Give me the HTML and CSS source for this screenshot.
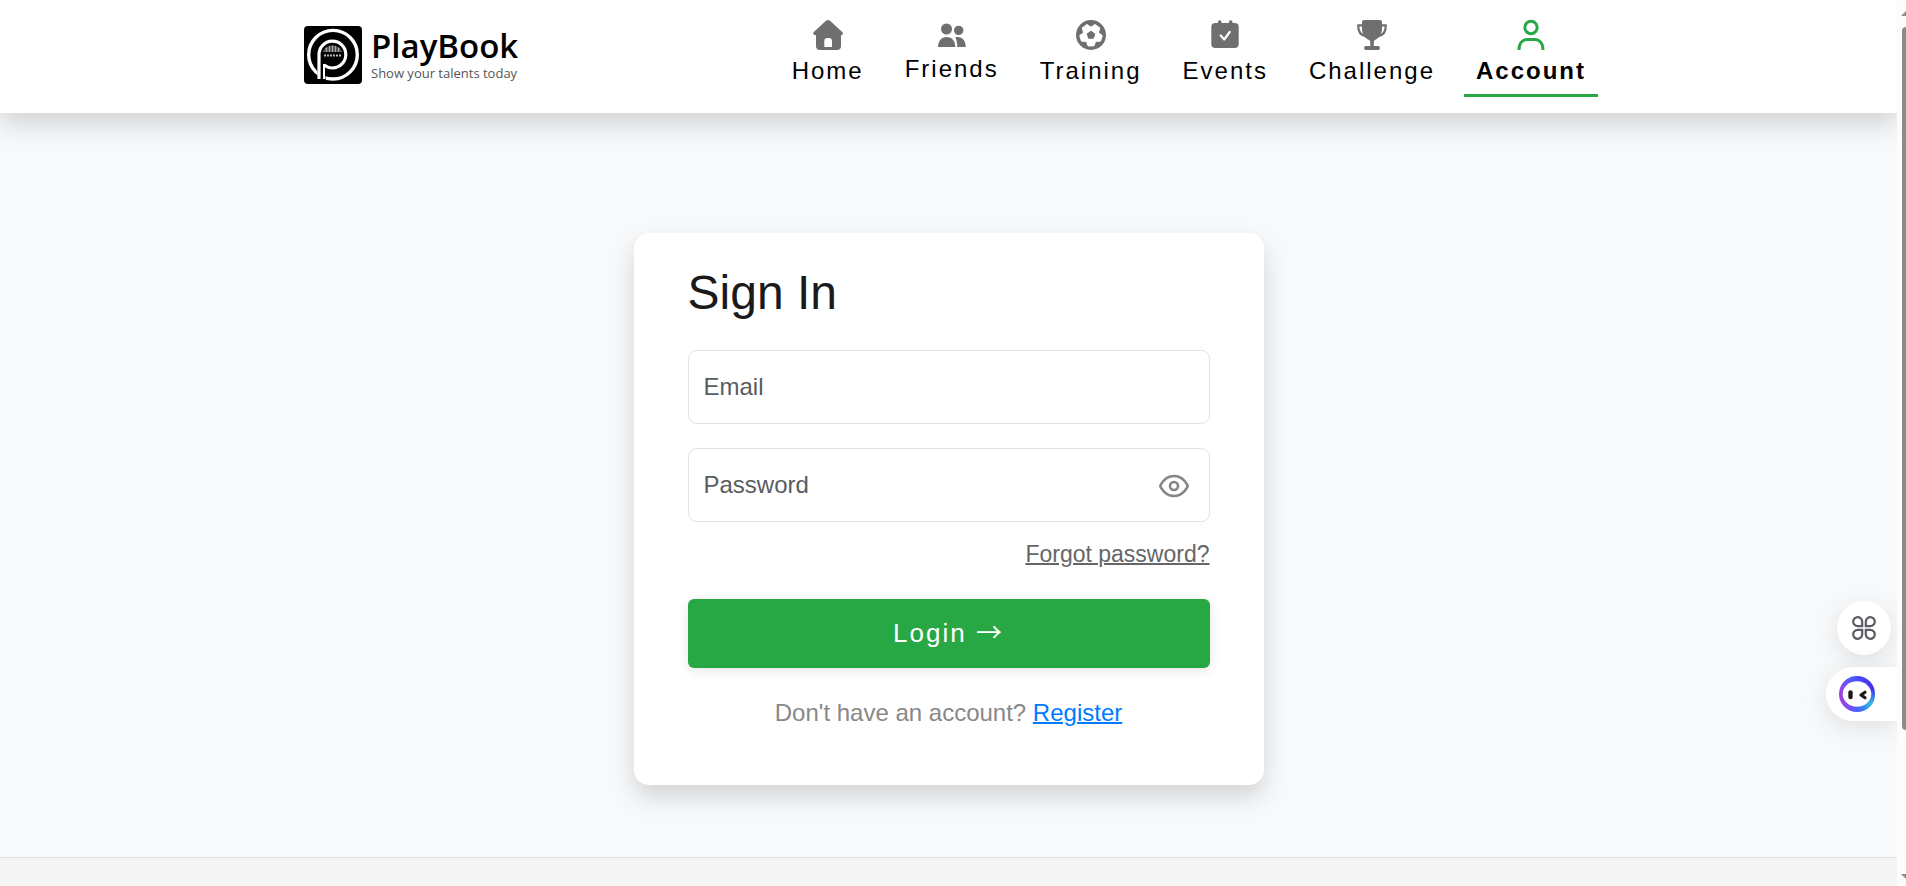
FILE: index.html
```
<!DOCTYPE html>
<html lang="en">
<head>
  <meta charset="utf-8">
  <meta name="viewport" content="width=device-width, initial-scale=1">
  <title>PlayBook - Sign In</title>
  <link rel="stylesheet" href="styles.css">
</head>
<body>
  <div class="page">
    <header class="header">
      <div class="container">
        <a class="brand" href="#">
          <svg class="brand-mark" viewBox="0 0 58 58" aria-hidden="true">
            <rect width="58" height="58" rx="4" fill="#000"/>
            <circle cx="29" cy="28.700" r="24.300" fill="none" stroke="#fff" stroke-width="3.400"/>
            <path d="M17.500 32v26" stroke="#000" stroke-width="8"/>
            <path d="M15 53V29a13.400 13.400 0 1 1 13.500 13q-4.500 0-8.500-3" fill="none" stroke="#fff" stroke-width="3.200"/>
            <path d="M20 38v15" stroke="#fff" stroke-width="2"/>
            <path d="M19 26a10 9.500 0 0 1 19 0" fill="#aaa"/>
            <path d="M21 23v3m3-6v6m3-6v6m3-6v6m3-6v6m3-3v3" stroke="#000"/>
            <path d="M20 29.500h18" stroke="#bbb" stroke-width="2" stroke-dasharray="2 1"/>
          </svg>
          <span class="brand-text">
            <span class="brand-name">PlayBook</span>
            <span class="brand-tagline">Show your talents today</span>
          </span>
        </a>
        <nav class="nav">
          <a class="nav-link" href="#">
            <svg class="nav-icon" viewBox="0 0 30 30" aria-hidden="true">
              <path fill-rule="evenodd" d="M13 .8Q15-.7 17 .8L29.500 12.300Q30.800 15 28 15.300V26q0 4-4 4H7q-4 0-4-4V15.300Q-.8 15 .5 12.300ZM11.300 27H19v-6q0-3-3-3h-1.700q-3 0-3 3Z"/>
            </svg>
            <span>Home</span>
          </a>
          <a class="nav-link" href="#">
            <svg class="nav-icon nav-icon-small" viewBox="0 0 28 28" aria-hidden="true">
              <circle cx="8.500" cy="9" r="5.500"/>
              <circle cx="20.700" cy="10.400" r="4.700"/>
              <path d="M0 27c0-6 3.500-10 8.700-10s8.600 4 8.600 10Z"/>
              <path d="M17.300 17.400C23.500 16 27.700 20 27.700 27h-8.400c0-4-.5-7-2-9.600Z"/>
            </svg>
            <span>Friends</span>
          </a>
          <a class="nav-link" href="#">
            <svg class="nav-icon" viewBox="0 0 30 30" aria-hidden="true">
              <circle cx="15" cy="15" r="15"/>
              <path d="M15 7.200L19 4.500 23.800 7.900 22.400 12.600 26.300 15.600 24.500 21.200 19.600 21.300 17.900 25.900H12.100L10.400 21.300 5.500 21.200 3.700 15.600 7.600 12.600 6.200 7.900 11 4.500Z" fill="#fff" stroke="#fff" stroke-linejoin="round"/>
              <path d="M15 11.500l3.500 2.500-1.300 4.100h-4.400L11.500 14Z" stroke="#6f6f6f" stroke-width="1.400" stroke-linejoin="round"/>
            </svg>
            <span>Training</span>
          </a>
          <a class="nav-link" href="#">
            <svg class="nav-icon" viewBox="0 0 30 30" aria-hidden="true">
              <rect x="1.300" y="3" width="27.400" height="25" rx="4"/>
              <path d="M9.700 2v5M20.700 2v5" stroke="#6f6f6f" stroke-width="3.600" stroke-linecap="round"/>
              <path d="M10.700 15.500l3.500 4 5.500-7.500" fill="none" stroke="#fff" stroke-width="2.200" stroke-linecap="round" stroke-linejoin="round"/>
            </svg>
            <span>Events</span>
          </a>
          <a class="nav-link" href="#">
            <svg class="nav-icon" viewBox="0 0 30 30" aria-hidden="true">
              <path d="M7 0h16q2 0 2 2v6c0 6-3 10-7 12q-1.200.7-1.200 2v4H21q2 0 2 2t-2 2H9q-2 0-2-2t2-2h4.300v-4q0-1.300-1.200-2C8 18 5 14 5 8V2q0-2 2-2Z"/>
              <path d="M6.500 5.300H1.200C1 11 3.500 15.500 9.500 16.500M23.500 5.300h5.300c.2 5.700-2.300 10.200-8.300 11.200" fill="none" stroke="#6f6f6f" stroke-width="2.200" stroke-linejoin="round"/>
            </svg>
            <span>Challenge</span>
          </a>
          <a class="nav-link active" href="#" aria-current="page">
            <svg class="nav-icon" viewBox="0 0 30 30" aria-hidden="true">
              <g fill="none" stroke="#28a745" stroke-width="3">
                <circle cx="15" cy="7.500" r="6.200"/>
                <path d="M3 30c0-6.500 3.500-10.500 8.500-10.500h7c5 0 8.500 4 8.500 10.500"/>
              </g>
            </svg>
            <span>Account</span>
          </a>
        </nav>
      </div>
    </header>

    <main class="main">
      <form class="card">
        <h1 class="title">Sign In</h1>
        <div class="field">
          <input class="field-input" id="email" type="email" autocomplete="email">
          <label class="field-label" for="email">Email</label>
        </div>
        <div class="field">
          <input class="field-input" id="password" type="password" autocomplete="current-password">
          <label class="field-label" for="password">Password</label>
          <button class="toggle" type="button" aria-label="Show password">
            <svg viewBox="0 0 30 24" width="30" height="24" fill="none" stroke="#858585" stroke-width="2.600" aria-hidden="true">
              <path d="M1.800 10.600C5 5 9.500 2 15 2s10 3 13.200 8.600q.8 1.400 0 2.800C25 19 20.500 22 15 22S5 19 1.800 13.400q-.8-1.400 0-2.800Z"/>
              <circle cx="15" cy="12" r="4"/>
            </svg>
          </button>
        </div>
        <a class="forgot" href="#">Forgot password?</a>
        <button class="submit" type="submit">Login <span class="submit-arrow">→</span></button>
        <p class="register">Don't have an account? <a href="#">Register</a></p>
      </form>
    </main>

    <footer class="footer"></footer>

    <div class="tools">
      <button class="tool-grid" type="button" aria-label="Tools">
        <svg viewBox="0 0 24 24" width="24" height="24" fill="none" stroke="#5c5a66" stroke-width="2.200" aria-hidden="true">
          <path d="M10.200 10.200V6A4.500 4.500 0 1 0 5.700 10.200ZM13.800 10.200V6a4.500 4.500 0 1 1 4.500 4.200ZM10.200 13.800V18a4.500 4.500 0 1 1-4.500-4.200ZM13.800 13.800V18a4.500 4.500 0 1 0 4.500-4.200Z"/>
        </svg>
      </button>
      <button class="tool-bot" type="button" aria-label="Assistant">
        <svg viewBox="0 0 36 36" width="36" height="36" aria-hidden="true">
          <defs>
            <linearGradient id="ring" x1="0" y1=".6" x2="1" y2=".4">
              <stop offset="0" stop-color="#a83de0"/>
              <stop offset=".4" stop-color="#4f5cff"/>
              <stop offset="1" stop-color="#4429f0"/>
            </linearGradient>
            <radialGradient id="glow" cx=".9" cy=".8" r=".45">
              <stop offset="0" stop-color="#2cc8e0"/>
              <stop offset="1" stop-color="#2cc8e0" stop-opacity="0"/>
            </radialGradient>
          </defs>
          <circle cx="18" cy="18" r="18" fill="url(#ring)"/>
          <circle cx="18" cy="18" r="18" fill="url(#glow)"/>
          <ellipse cx="18" cy="18" rx="14.300" ry="12.700" fill="#fff"/>
          <path d="M11.500 16.500v4.500" stroke="#1a1a1a" stroke-width="4.400" stroke-linecap="round"/>
          <path d="M26 16.200l-4 2.800 4 2.800" fill="none" stroke="#1a1a1a" stroke-width="3.200" stroke-linecap="round" stroke-linejoin="round"/>
        </svg>
      </button>
    </div>
  </div>

  <div class="scrollbar" aria-hidden="true">
    <span class="arrow arrow-up"></span>
    <span class="thumb"></span>
    <span class="arrow arrow-down"></span>
  </div>
</body>
</html>
```
FILE: styles.css
```
* {
  box-sizing: border-box;
}
body {
  display: flex;
  margin: 0;
  min-height: 100vh;
  background: #f8f9fb;
  font: 24px/36px "Liberation Sans", Arial, sans-serif;
  color: #1a1a1a;
}
button,
input {
  font: inherit;
}
.page {
  flex: 1;
  display: flex;
  flex-direction: column;
  position: relative;
  min-width: 0;
  overflow: hidden;
}

/* header */
.header {
  padding: 20px 24px 16px;
  background: #fff;
  box-shadow: 0 12px 24px rgba(0, 0, 0, 0.15);
}
.container {
  display: flex;
  justify-content: space-between;
  max-width: 1299px;
  margin: 0 auto;
}
.brand {
  display: flex;
  align-items: flex-start;
  gap: 9px;
  padding: 6px 5px;
  color: #000;
  font-family: "Open Sans", "Noto Sans", sans-serif;
  text-decoration: none;
}
.brand-mark {
  width: 58px;
  height: 58px;
}
.brand-text {
  display: flex;
  flex-direction: column;
}
.brand-name {
  font-size: 33px;
  font-weight: 600;
  line-height: 40px;
}
.brand-tagline {
  font-size: 13px;
  line-height: 14px;
  color: #555;
}
.nav {
  display: flex;
  align-items: flex-start;
  gap: 17px;
}
.nav-link {
  display: flex;
  flex-direction: column;
  align-items: center;
  gap: 3px;
  padding: 0 12px 5px;
  border-bottom: 3px solid transparent;
  color: #000;
  letter-spacing: 2px;
  text-decoration: none;
}
.nav-link.active {
  border-color: #28a745;
  font-weight: bold;
}
.nav-icon {
  width: 30px;
  height: 30px;
  fill: #6f6f6f;
  overflow: visible;
}
.nav-icon-small {
  width: 28px;
  height: 28px;
}

/* sign in card */
.main {
  padding: 120px 24px 72px;
}
.card {
  display: flex;
  flex-direction: column;
  max-width: 630px;
  margin: 0 auto;
  padding: 31px 54px 54px;
  border-radius: 15px;
  background: #fff;
  box-shadow: 0 12px 24px rgba(0, 0, 0, 0.15);
}
.title {
  margin: 0 0 28px;
  font-size: 48px;
  font-weight: normal;
  line-height: 58px;
}
.field {
  position: relative;
  margin-bottom: 24px;
}
.field-input {
  display: block;
  width: 100%;
  height: 74px;
  padding: 18px 16px;
  border: 1px solid #dee2e6;
  border-radius: 9px;
  background: #fff;
}
.field-label {
  position: absolute;
  top: 19px;
  left: 16px;
  color: #595c5f;
  pointer-events: none;
}
.toggle {
  position: absolute;
  top: 26px;
  right: 21px;
  display: flex;
  padding: 0;
  border: 0;
  background: none;
}
.forgot {
  align-self: flex-end;
  margin: -10px 0 27px;
  color: #666;
  font-size: 23px;
  text-decoration-thickness: 2px;
}
.submit {
  padding: 16px;
  border: 0;
  border-radius: 6px;
  background: #28a745;
  box-shadow: 0 3px 12px rgba(0, 0, 0, 0.1);
  color: #fff;
  font-size: 26px;
  line-height: 37px;
  letter-spacing: 2px;
}
.submit-arrow {
  font-family: "Noto Sans CJK JP", sans-serif;
  line-height: 1;
}
.register {
  margin: 27px 0 0;
  color: #888;
  text-align: center;
}
.register a {
  color: #007bff;
  text-decoration-thickness: 2px;
}
.footer {
  flex: 1;
  min-height: 29px;
  border-top: 1px solid #dee2e6;
  background: #f5f5f5;
}

/* floating tools */
.tools {
  position: absolute;
  right: 0;
  top: 601px;
  display: flex;
  flex-direction: column;
  align-items: flex-end;
  gap: 12px;
}
.tools button {
  display: flex;
  align-items: center;
  height: 54px;
  border: 0;
  background: #fff;
  box-shadow: 0 6px 24px rgba(0, 0, 0, 0.1);
}
.tools .tool-grid {
  justify-content: center;
  width: 54px;
  margin-right: 6px;
  padding: 0;
  border-radius: 50%;
}
.tools .tool-bot {
  width: 71px;
  padding: 0 0 0 13px;
  border-radius: 27px 0 0 27px;
}

/* page scrollbar */
.scrollbar {
  display: flex;
  flex-direction: column;
  align-items: flex-end;
  width: 9px;
  padding: 11px 0 7px;
  background: #fcfcfc;
  overflow: hidden;
}
.arrow {
  width: 5px;
  height: 5px;
  background: #8b8b8b;
}
.arrow-up {
  margin-bottom: 11px;
  clip-path: polygon(0 100%, 100% 0, 100% 100%);
}
.arrow-down {
  margin-top: auto;
  clip-path: polygon(0 0, 100% 0, 100% 100%);
}
.thumb {
  width: 4px;
  height: 81%;
  border-radius: 4px 0 0 4px;
  background: #8b8b8b;
}
```
